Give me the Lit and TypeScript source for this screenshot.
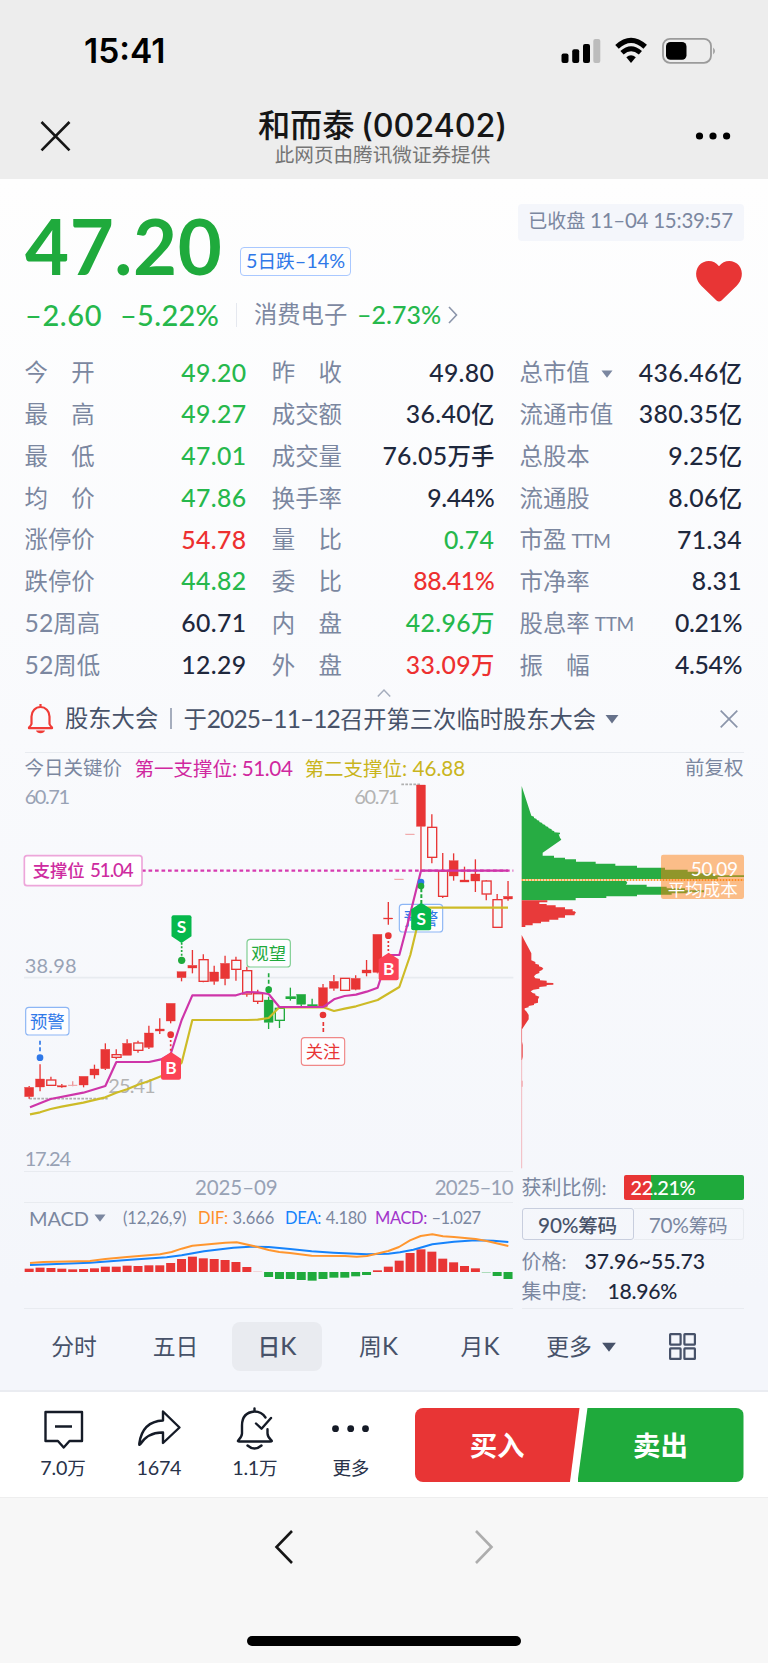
import { LitElement, html, svg, css } from "lit";
import { customElement } from "lit/decorators.js";

type Candle = [kind: string, high: number, top: number, bottom: number, low: number];

const RED = "#e83535";
const GREEN = "#1faa3c";
const STEP = 32.65;
const FIRST = 87.5;

// Plots use three units per CSS pixel.
const CANDLES: Candle[] = [
  ["R", 918, 922, 950, 956], ["R", 853, 897, 921, 934], ["r", 890, 899, 917, 917], ["R", 912, 917, 921, 923],
  ["t", 904, 915, 917, 919], ["R", 889, 889, 915, 922], ["R", 854, 867, 885, 896], ["R", 790, 808, 866, 870],
  ["r", 808, 823, 833, 838], ["R", 778, 790, 826, 826], ["r", 782, 788, 812, 818], ["R", 737, 759, 802, 807],
  ["R", 715, 747, 753, 762], ["R", 670, 670, 723, 730], ["R", 575, 575, 593, 604], ["R", 510, 556, 564, 580],
  ["r", 523, 538, 605, 607], ["R", 557, 576, 604, 614], ["R", 527, 550, 596, 616], ["r", 530, 540, 569, 602],
  ["r", 560, 571, 643, 650], ["r", 629, 640, 665, 672], ["G", 650, 660, 727, 747], ["g", 680, 684, 722, 744],
  ["g", 623, 650, 656, 662], ["G", 643, 643, 673, 680], ["g", 656, 674, 680, 680], ["R", 612, 623, 680, 682],
  ["R", 585, 604, 625, 632], ["r", 594, 594, 632, 632], ["R", 586, 595, 628, 631], ["R", 540, 570, 579, 589],
  ["R", 463, 463, 577, 580], ["R", 366, 414, 417, 434], ["t", 297, 297, 299, 299], ["t", 162, 162, 164, 164],
  ["R", 15, 15, 139, 270], ["r", 103, 141, 233, 250], ["r", 219, 272, 350, 354], ["R", 220, 242, 288, 302],
  ["R", 260, 300, 306, 306], ["R", 238, 282, 303, 336], ["r", 300, 302, 343, 361], ["r", 342, 358, 443, 443],
  ["R", 303, 349, 357, 362],
];

const FIRST_SUPPORT =
  "90,982 120,970 152,957 250,938 316,918 349,846 447,846 483,838 512,822 545,720 577,646 708,646 741,636 773,637 806,642 838,681 970,681 1002,658 1034,648 1068,644 1100,635 1133,623 1165,525 1198,525 1231,400 1263,272 1524,272";
const SECOND_SUPPORT =
  "90,1003 120,997 152,987 185,980 250,968 316,952 349,938 381,928 414,914 447,903 483,889 512,880 545,848 577,720 741,720 773,719 806,714 838,682 970,682 1002,693 1034,686 1068,679 1133,660 1198,621 1231,525 1249,450 1270,383 1524,383";

const MACD = [
  10, 13, 12, 10, 8, 9, 11, 16, 16, 19, 18, 20, 20, 27, 39, 46, 41, 39, 36, 30, 15, 1, -15, -21, -21, -24, -26, -21,
  -17, -17, -13, -9, 5, 16, 34, 57, 68, 61, 40, 29, 18, 11, -2, -12, -21,
];
const DIF =
  "90,309 130,306 270,303 316,297 381,291 480,283 515,276 545,266 577,257 676,248 710,247 773,261 806,270 838,276 870,279 935,287 1035,288 1070,290 1101,288 1165,273 1197,261 1230,241 1262,228 1297,223 1329,229 1362,231 1427,237 1460,243 1525,258";
const DEA =
  "90,315 270,308 381,300 500,292 545,286 612,274 700,263 750,260 806,261 870,267 935,274 1000,278 1100,283 1165,281 1200,277 1240,269 1297,253 1362,245 1427,241 1480,242 1525,246";

const CHIPS_ABOVE =
  "35,48 64,137 72,140 72,144 80,147 80,150 88,152 88,156 97,159 97,162 106,165 106,168 115,171 115,174 125,178 125,181 133,184 133,187 150,188 150,193 146,193 150,203 154,209 98,248 98,257 132,257 132,263 165,263 165,268 198,268 198,275 257,275 257,281 316,281 316,287 381,287 381,293 465,293 465,299 533,299 533,305 565,305 565,310 610,310 610,316 702,316 702,321 623,321 623,327 35,327";
const CHIPS_BELOW =
  "35,333 348,333 352,338 348,344 410,344 410,350 470,350 470,355 525,355 525,361 582,361 582,367 530,367 530,370 485,370 485,374 381,374 381,379 289,379 289,384 197,384 197,391 35,391";
const CHIPS_PROFIT =
  "35,391 112,391 112,397 88,397 88,402 110,402 110,406 137,406 137,412 165,412 165,418 188,418 188,424 194,424 198,428 194,432 194,436 165,436 165,443 145,443 145,449 118,449 118,455 93,455 93,460 68,460 68,466 46,466 46,471 35,471";
const CHIPS_LOW =
  "35,495 64,550 64,571 76,576 76,581 87,584 87,589 96,592 100,596 95,601 88,604 88,609 78,613 72,619 76,625 90,626 90,631 110,632 110,638 130,639 130,644 110,645 110,649 88,651 88,656 70,659 62,664 68,669 76,671 76,676 88,680 84,688 84,698 72,701 72,705 56,708 56,712 44,715 44,719 50,725 56,735 56,748 50,757 36,778 36,815 38,825 38,860 36,870 35,870";

type Stat = [label: string, value: string, tone?: string, extra?: string];
const STATS: Stat[] = [
  ["今　开", "49.20", "down"], ["昨　收", "49.80"], ["总市值", "436.46亿", "", "▾"],
  ["最　高", "49.27", "down"], ["成交额", "36.40亿"], ["流通市值", "380.35亿"],
  ["最　低", "47.01", "down"], ["成交量", "76.05万手"], ["总股本", "9.25亿"],
  ["均　价", "47.86", "down"], ["换手率", "9.44%"], ["流通股", "8.06亿"],
  ["涨停价", "54.78", "up"], ["量　比", "0.74", "down"], ["市盈", "71.34", "", "TTM"],
  ["跌停价", "44.82", "down"], ["委　比", "88.41%", "up"], ["市净率", "8.31"],
  ["52周高", "60.71"], ["内　盘", "42.96万", "down"], ["股息率", "0.21%", "", "TTM"],
  ["52周低", "12.29"], ["外　盘", "33.09万", "up"], ["振　幅", "4.54%"],
];

// Wraps each run of Latin text and digits so it can be sized apart from the Chinese text.
const mixed = (text: string) =>
  text.split(/([!-~–][ -~–]*)/).filter(Boolean).map((part) =>
    /^[!-~–]/.test(part) ? html`<span class=${part.endsWith("%") ? "n pct" : "n"}>${part}</span>` : part);

const triangle = (cls: string) => html`<svg class=${cls} viewBox="0 0 12 8"><path d="M0.5 0.5h11L6 7.8z" fill="currentColor" /></svg>`;

@customElement("app-root")
export class AppRoot extends LitElement {
  static styles = css`
    :host { display: block; width: 768px; height: 1663px; overflow: hidden; background: #f7f7f7; color: #1e283d;
      font-family: Lato, "Noto Sans CJK SC", sans-serif; line-height: 1; white-space: nowrap; }
    * { box-sizing: border-box; }
    svg { display: block; flex: none; overflow: visible; }
    .n { font-size: 1.06em; }
    .up { color: #ed3030; }
    .down { color: #26b84c; }
    .status { height: 95px; background: #ededed; display: flex; align-items: center; padding: 7px 51px 0 84px; justify-content: space-between; }
    .clock { font: 600 33.5px/1 Inter, sans-serif; color: #000; letter-spacing: 0; padding-top: 2px; }
    .nav { height: 84px; background: #ededed; display: flex; justify-content: space-between; padding: 0 37px 0 40px; }
    .nav .x { margin-top: 25px; }
    .nav .dots { margin-top: 37px; }
    .titles { display: flex; flex-direction: column; align-items: center; margin-right: 1px; }
    .title { font: 500 32.3px/40px Inter, "Noto Sans CJK SC", sans-serif; color: #161616; margin-top: 11px; height: 38px; word-spacing: -2px; letter-spacing: -0.1px; }
    .sub { font-size: 19.6px; line-height: 22px; color: #757575; }
    .page { background: linear-gradient(#fefefe, #f4f6fb 92%); height: 1213px; border-bottom: 2px solid #eaecf1; }
    .quote { height: 172px; padding: 25px 24.5px 0 25px; display: flex; justify-content: space-between; }
    .price-line { display: flex; align-items: flex-start; height: 91px; }
    .price { font-size: 76px; font-weight: 700; line-height: 84px; color: #1faa3c; letter-spacing: 0.6px; width: 215px; }
    .tag { margin-top: 43px; height: 29px; width: 111px; border: 1.5px solid #a9c8ff; border-radius: 4px; color: #2f78e8; font-size: 18.7px; line-height: 25px; text-align: center; }
    .changes { display: flex; align-items: center; height: 42px; padding-bottom: 3px; }
    .chg { font-size: 29px; font-weight: 500; color: #26b84c; letter-spacing: 0.6px; }
    .chg1 { width: 95px; } .chg2 { width: 115.5px; letter-spacing: 0.3px; }
    .vr { width: 1.5px; height: 24px; background: #e5e8ef; }
    .sector { font-size: 23.3px; color: #7d88a1; margin-left: 17px; width: 103px; padding-top: 1px; }
    .sector-chg { font-size: 25px; font-weight: 500; color: #26b84c; width: 91px; }
    .side { display: flex; flex-direction: column; align-items: flex-end; }
    .closed { width: 226px; height: 37px; border-radius: 4px; background: #f4f6fb; color: #7b87a0; font-size: 19px; line-height: 33px; text-align: center; }
    .closed .n { font-size: 20.5px; letter-spacing: -0.25px; }
    .heart { margin: 20px 2px 0 0; }
    .stats { display: grid; margin: 0; grid-template-columns: 222px 222.5px 222.5px; column-gap: 25.3px; grid-auto-rows: 41.8px; padding: 1px 25px 0 24.5px; }
    .stat { display: flex; align-items: center; justify-content: space-between; font-size: 23.4px; font-weight: 500; }
    .stat dt { color: #7b87a0; font-weight: 400; display: flex; align-items: center; }
    .stat dd { margin: 0; }
    .stat dd .n { letter-spacing: 0.35px; }
    .stat dd .pct { letter-spacing: -0.4px; }
    .ttm { font-size: 19px; margin-left: 5px; letter-spacing: -0.3px; }
    .tri-s { width: 12px; height: 10px; margin-left: 11px; margin-top: 2px; }
    .caret { height: 14.6px; display: flex; justify-content: center; padding-top: 3px; }
    .notice { height: 52px; margin: 0 24.5px; border-bottom: 1.5px solid #e8ebf0; display: flex; align-items: center; padding: 0 5.5px 15px 2.5px; font-size: 23.3px; color: #475269; }
    .notice .what { margin-left: 11px; width: 105px; }
    .notice .bar { width: 1.5px; height: 21px; background: #a5adbd; margin-right: 12px; }
    .notice .tri-s { margin: 0 auto 0 9px; width: 14px; color: #66718a; }
    .notice .msg .n { font-size: 24.5px; letter-spacing: -0.9px; }
    .keys { height: 27px; display: flex; align-items: center; padding: 3px 24.5px 0 24.5px; font-size: 19.5px; color: #7b87a0; }
    .keys .k0 { width: 110px; } .keys .k1 { width: 170px; color: #d0289f; } .keys .k2 { color: #c9b51d; } .keys .adj { margin-left: auto; }
    .keys .k1 .n { letter-spacing: -0.4px; }
    .lower { display: grid; grid-template-columns: 489px 222px; column-gap: 8.5px; padding-left: 24px; height: 138px; }
    .dates { height: 32px; border-top: 1.5px solid #e8ebf0; border-bottom: 1.5px solid #e8ebf0; display: flex; align-items: center; justify-content: space-between; padding-left: 171px; font-size: 20.5px; color: #98a2b5; letter-spacing: -0.1px; }
    .dates span + span { letter-spacing: -0.7px; }
    .legend { height: 27px; display: flex; align-items: center; padding: 4px 0 0 5px; font-size: 16.5px; color: #7b87a0; letter-spacing: -0.1px; }
    .ind { font-size: 20px; width: 65px; letter-spacing: -0.1px; }
    .legend .tri-s { margin: 0 17px 0 0; }
    .legend .par { width: 75px; } .legend .lg1 { width: 87px; } .legend .lg2 { width: 90px; }
    .legend .lg1 b, .legend .lg2 b, .legend .lg3 b { font-weight: 400; margin-right: 4.5px; }
    .lg1 b { color: #ff8f2b; } .lg2 b { color: #1683fb; } .lg3 b { color: #a235cb; }
    .lg3 { letter-spacing: -0.4px; } .lg2 { letter-spacing: -0.3px; }
    .left { border-bottom: 1.5px solid #e8ebf0; }
    .chips { border-bottom: 1.5px solid #e8ebf0; color: #7b87a0; font-size: 20px; }
    .profit { display: flex; align-items: center; height: 33px; margin-bottom: 4px; }
    .profit .lbl { width: 102px; }
    .gauge { width: 120px; height: 25px; border-radius: 2px; background: linear-gradient(90deg, #e83535 22.6%, #1faa3c 22.6%); color: #fff; font-weight: 500; line-height: 24px; padding-left: 7px; font-size: 20px; letter-spacing: -0.4px; }
    .pair { display: flex; height: 32.5px; }
    .pair div { width: 112px; border: 1.5px solid #c8cede; border-radius: 3px; text-align: center; line-height: 33px; font-weight: 500; color: #475269; font-size: 19.6px; letter-spacing: -0.25px; }
    .pair div + div { border-color: #e8ebf0; border-left: 0; border-radius: 0 3px 3px 0; width: 110px; color: #7b87a0; font-weight: 400; }
    .fact { height: 30px; display: flex; align-items: center; }
    .fact:nth-child(3) { margin-top: 6px; }
    .fact strong { color: #1e283d; font-weight: 500; margin-left: 18px; }
    .fact:nth-child(4) strong { margin-left: 21px; letter-spacing: -0.3px; }
    .periods { height: 82px; display: flex; align-items: center; padding: 0 72px 7px 29px; font-size: 22.8px; color: #475269; }
    .periods div { width: 90px; height: 49px; border-radius: 8px; display: flex; align-items: center; justify-content: center; margin-right: 11.5px; }
    .periods .on { background: #e9ebf0; font-weight: 500; }
    .periods .more { margin-left: 8px; width: 74px; margin-right: auto; }
    .periods .tri-s { width: 16px; margin-left: 9px; }
    .tools { height: 106px; background: #fff; border-bottom: 1.5px solid #eeeeee; display: flex; padding: 16px 24.5px 0 15px; }
    .tool { width: 96px; display: flex; flex-direction: column; align-items: center; font-size: 18.6px; color: #283249; }
    .tool svg { margin-bottom: 8px; }
    .tool p { margin: 0; height: 20px; line-height: 20px; letter-spacing: -0.2px; }
    .trade { margin-left: 16px; width: 329px; height: 74px; border-radius: 8px; overflow: hidden; display: flex; color: #fff; font-size: 27.5px; font-weight: 700; line-height: 75px; text-align: center; }
    .buy { width: 165px; background: #e83535; clip-path: polygon(0 0, 100% 0, 94.2% 100%, 0 100%); }
    .sell { width: 166px; margin-left: -2px; background: #1faa3c; clip-path: polygon(6% 0, 100% 0, 100% 100%, 0 100%); flex: none; }
    .history { height: 138px; display: flex; justify-content: center; gap: 182px; padding-top: 32px; }
    .home { width: 274px; height: 10px; border-radius: 5px; background: #000; margin: 0 auto; }
    .t { font-family: Lato, "Noto Sans CJK SC", sans-serif; }
  `;

  private candle([kind, high, top, bottom, low]: Candle, i: number) {
    const x = FIRST + i * STEP;
    const color = kind.toLowerCase() === "g" ? GREEN : RED;
    const hollow = kind === "r" || kind === "g";
    return svg`<g stroke=${color} stroke-width="4" opacity=${kind === "t" ? 0.5 : 1}>
      ${high < top ? svg`<line x1=${x} x2=${x} y1=${high} y2=${top} />` : ""}
      ${low > bottom ? svg`<line x1=${x} x2=${x} y1=${bottom} y2=${low} />` : ""}
      ${hollow
        ? svg`<rect x=${x - 12.5} y=${top + 1} width="27" height=${Math.max(bottom - top - 2, 3)} fill="none" />`
        : svg`<rect x=${x - 13.5} y=${top} width="27" height=${bottom - top} fill=${color} stroke=${color} stroke-width="1" />`}
    </g>`;
  }

  private badge(x: number, y: number, color: string, letter: string, up: boolean) {
    const shape = up ? "M0-48 30-28V29q0 6-6 6H-24q-6 0-6-6V-28z" : "M0 48 30 28V-29q0-6-6-6H-24q-6 0-6 6V28z";
    return svg`<g transform="translate(${x} ${y})"><path d=${shape} fill=${color} />
      <text class="t" x="0" y="18" font-size="52" font-weight="700" fill="#fff" text-anchor="middle">${letter}</text></g>`;
  }

  private flag(x: number, y: number, color: string, edge: string, text: string) {
    return svg`<rect x=${x} y=${y} width="130" height="83" rx="10" fill="#fdfdff" stroke=${edge} stroke-width="3.5" />
      <text class="t" x=${x + 65} y=${y + 61} font-size="52" fill=${color} text-anchor="middle">${text}</text>`;
  }

  private label(x: number, y: number, width: number, text: string, color = "#98a2b5") {
    return svg`<text class="t" x=${x} y=${y} font-size="60" fill=${color} textLength=${width}>${text}</text>`;
  }

  private chart() {
    return html`<svg width="768" height="391" viewBox="0 0 2304 1173">
      <line x1="72" x2="1540" y1="593" y2="593" stroke="#e8ebf0" stroke-width="5" />
      ${this.label(74, 71, 136, "60.71")} ${this.label(74, 579, 156, "38.98")} ${this.label(74, 1159, 139, "17.24")}
      ${this.label(1063, 71, 136, "60.71", "#b3b3b3")} ${this.label(325, 940, 142, "25.41", "#b3b3b3")}
      <path d="M1204 13h60M88 956h235" stroke="#b0b0b0" stroke-width="5" stroke-dasharray="8 4" />
      <line x1="426" x2="1540" y1="272" y2="272" stroke="#d63ab0" stroke-width="7" stroke-dasharray="11 8.5" />
      ${this.flag(1198, 373, "#2f78e8", "#8db6f5", "预警")}
      ${CANDLES.map((c, i) => this.candle(c, i))}
      <g fill="none" stroke-width="6.5" stroke-linejoin="round">
        <polyline points=${SECOND_SUPPORT} stroke="#cdbb27" />
        <polyline points=${FIRST_SUPPORT} stroke="#ce35a9" />
      </g>
      <rect x="73" y="227" width="353" height="90" rx="8" fill="#fff" stroke="#eda6da" stroke-width="5" />
      <text class="t" x="98" y="290" font-size="52" font-weight="500" fill="#ce2ba0">支撑位</text>
      <text class="t" x="270" y="290" font-size="56" font-weight="500" fill="#ce2ba0" textLength="131">51.04</text>

      <path d="M120 782v34" stroke="#2f78e8" stroke-width="5" stroke-dasharray="12 8" />
      <circle cx="120" cy="833" r="10" fill="#2f78e8" />
      ${this.flag(77, 682, "#2f78e8", "#8db6f5", "预警")}
      <path d="M545 488v42" stroke=${GREEN} stroke-width="5" stroke-dasharray="6 5" />
      <circle cx="545" cy="541" r="11" fill=${GREEN} />
      ${this.badge(544.5, 441, "#06b84c", "S", false)}
      <path d="M512 780v40" stroke=${RED} stroke-width="5" stroke-dasharray="6 7" />
      <circle cx="512" cy="764" r="10" fill=${RED} />
      ${this.badge(513, 864, "#fb4256", "B", true)}
      <path d="M806 580v40" stroke=${GREEN} stroke-width="5" stroke-dasharray="12 7" />
      <circle cx="806" cy="629" r="10" fill=${GREEN} />
      ${this.flag(741, 478, GREEN, "#7dcd90", "观望")}
      <path d="M970 726v30" stroke=${RED} stroke-width="5" stroke-dasharray="12 6" />
      <circle cx="969" cy="705" r="10" fill=${RED} />
      ${this.flag(904, 773, RED, "#f08888", "关注")}
      <path d="M1165 483v36" stroke=${RED} stroke-width="5" stroke-dasharray="6 6" />
      <circle cx="1165" cy="467" r="10" fill=${RED} />
      ${this.badge(1166, 566, "#fb4256", "B", true)}
      <circle cx="1263" cy="306" r="10" fill="#2f78e8" />
      <circle cx="1263" cy="318" r="10" fill=${GREEN} />
      <path d="M1264 326v44" stroke=${GREEN} stroke-width="6" stroke-dasharray="11 6" />
      ${this.badge(1263.5, 416, "#06b84c", "S", true)}

      <g transform="translate(1530 -30)">
        <line x1="35" x2="35" y1="770" y2="1195" stroke="#f2b9bf" stroke-width="3" />
        <path d="M35 932h3v18h-3z" fill="#f2a0a5" />
        <polygon points=${CHIPS_ABOVE} fill="#27ac43" />
        <polygon points=${CHIPS_BELOW} fill="#27ac43" />
        <polygon points=${CHIPS_PROFIT} fill="#e83a3a" />
        <polygon points=${CHIPS_LOW} fill="#e83a3a" />
        <line x1="35" x2="352" y1="330" y2="330" stroke="#e9f3df" stroke-width="6" />
        <line x1="35" x2="702" y1="330" y2="330" stroke="#ff9b32" stroke-width="6" stroke-dasharray="5 4" />
        <rect x="453" y="254" width="249" height="133" rx="7" fill="#ff7f11" fill-opacity="0.49" />
        <text class="t" x="542" y="317" font-size="57" fill="#fff" textLength="142">50.09</text>
        <text class="t" x="473" y="377" font-size="52.5" fill="#fff">平均成本</text>
      </g>
    </svg>`;
  }

  private macdPlot() {
    return html`<svg width="489" height="60" viewBox="72 210 1467 180">
      ${MACD.map((v, i) => svg`<rect x=${FIRST + i * STEP - 13.5} y=${v > 0 ? 336 - v : 336} width="27"
        height=${Math.abs(v)} fill=${v > 0 ? RED : GREEN} opacity=${Math.abs(v) < 3 ? 0.5 : 1} />`)}
      <g fill="none" stroke-width="6" stroke-linejoin="round">
        <polyline points=${DEA} stroke="#1683fb" />
        <polyline points=${DIF} stroke="#ff962f" />
      </g>
    </svg>`;
  }

  render() {
    return html`
      <header>
        <div class="status">
          <div class="clock">15:41</div>
          <svg width="156" height="26" viewBox="561 38 156 26">
            <rect x="561.5" y="53.5" width="7" height="9.5" rx="2" /><rect x="572.2" y="49.3" width="7" height="13.7" rx="2" />
            <rect x="583" y="44" width="7" height="19" rx="2" /><rect x="593.3" y="39" width="7" height="24" rx="2" fill="#bcbcbc" />
            <path d="M617 46.8Q631 34 645.2 46.8" fill="none" stroke="#000" stroke-width="5.2" />
            <path d="M622 52.7Q631 44.6 640.4 52.7" fill="none" stroke="#000" stroke-width="4.8" />
            <path d="M626.3 57.3Q631 53.4 635.8 57.3L631 63z" />
            <rect x="663" y="38.8" width="48" height="24" rx="7" fill="none" stroke="#9b9b9b" stroke-width="1.8" />
            <rect x="666" y="42" width="20.5" height="17.8" rx="4.5" /><path d="M713.3 47.5q3 3.3 0 7z" fill="#8b8b8b" />
          </svg>
        </div>
        <div class="nav">
          <svg class="x" width="31" height="32" viewBox="0 0 31 32"><path d="M1.5 2l28 28.4M29.5 2l-28 28.4" stroke="#161616" stroke-width="2.6" /></svg>
          <div class="titles"><div class="title">和而泰 (002402)</div><div class="sub">此网页由腾讯微证券提供</div></div>
          <svg class="dots" width="36" height="8" viewBox="0 0 36 8"><circle cx="4.5" cy="4" r="3.6" /><circle cx="18" cy="4" r="3.6" /><circle cx="31.6" cy="4" r="3.6" /></svg>
        </div>
      </header>

      <main class="page">
        <section class="quote">
          <div>
            <div class="price-line"><div class="price">47.20</div><div class="tag">${mixed("5日跌–14%")}</div></div>
            <div class="changes">
              <span class="chg chg1">–2.60</span><span class="chg chg2">–5.22%</span><i class="vr"></i>
              <span class="sector">消费电子</span><span class="sector-chg">–2.73%</span>
              <svg width="10" height="18" viewBox="0 0 10 18"><path d="M1 1l7.5 8L1 17" fill="none" stroke="#8b95aa" stroke-width="1.6" /></svg>
            </div>
          </div>
          <div class="side">
            <div class="closed">${mixed("已收盘 11–04 15:39:57")}</div>
            <svg class="heart" width="46" height="41" viewBox="0 0 46 41"><path d="M23 5.2C28-1.8 38-1.5 43 4.5c5 6.5 3 15-2.5 20.5L25.5 39.5q-2.5 2.2-5 0L5.5 25C0 19.500-2 11 3 4.500 8-1.500 18-1.800 23 5.200z" fill="#e83535" /></svg>
          </div>
        </section>

        <dl class="stats">
          ${STATS.map(([label, value, tone, extra]) => html`<div class="stat">
            <dt>${mixed(label)}${extra === "TTM" ? html`<span class="ttm">TTM</span>` : extra ? triangle("tri-s") : ""}</dt>
            <dd class=${tone ?? ""}>${mixed(value)}</dd></div>`)}
        </dl>
        <div class="caret"><svg width="14" height="8" viewBox="0 0 14 8"><path d="M0.8 7.5L7 1l6.2 6.500" fill="none" stroke="#a5adbd" stroke-width="1.5" /></svg></div>

        <div class="notice">
          <svg width="27" height="30" viewBox="0 0 27 30" fill="none" stroke="#f03b36" stroke-width="2.2">
            <path d="M13.5 0v3M4.5 20v-7.500a9 9.500 0 0118 0V20q.5 1.5 2.5 3.500v.7H2v-.7q2-2 2.500-3.500z" stroke-linejoin="round" /><path d="M9 26.500h9q-1 2.700-4.500 2.700T9 26.500z" fill="#f03b36" stroke="none" />
          </svg>
          <span class="what">股东大会</span><i class="bar"></i><span class="msg">${mixed("于2025–11–12召开第三次临时股东大会")}</span>
          ${triangle("tri-s")}
          <svg width="18" height="18" viewBox="0 0 18 18"><path d="M.7.7l16.600 16.600M17.300.7L.7 17.300" stroke="#8b95aa" stroke-width="1.7" /></svg>
        </div>

        <div class="keys"><span class="k0">今日关键价</span><span class="k1">${mixed("第一支撑位: 51.04")}</span><span class="k2">${mixed("第二支撑位: 46.88")}</span><span class="adj">前复权</span></div>
        ${this.chart()}

        <section class="lower">
          <div class="left">
            <div class="dates"><span>2025–09</span><span>2025–10</span></div>
            <div class="legend"><span class="ind">MACD</span>${triangle("tri-s")}<span class="par">(12,26,9)</span>
              <span class="lg1"><b>DIF:</b>3.666</span><span class="lg2"><b>DEA:</b>4.180</span><span class="lg3"><b>MACD:</b>–1.027</span></div>
            ${this.macdPlot()}
          </div>
          <div class="chips">
            <div class="profit"><span class="lbl">获利比例:</span><div class="gauge">22.21%</div></div>
            <div class="pair"><div>${mixed("90%筹码")}</div><div>${mixed("70%筹码")}</div></div>
            <div class="fact">价格:<strong>${mixed("37.96~55.73")}</strong></div>
            <div class="fact">集中度:<strong>${mixed("18.96%")}</strong></div>
          </div>
        </section>

        <nav class="periods">
          <div>分时</div><div>五日</div><div class="on">${mixed("日K")}</div><div>${mixed("周K")}</div><div>${mixed("月K")}</div>
          <div class="more">更多${triangle("tri-s")}</div>
          <svg width="27" height="27" viewBox="0 0 27 27" fill="none" stroke="#475269" stroke-width="2.2"><rect x="1.1" y="1.1" width="10.5" height="10.5" rx=".5" /><rect x="15.4" y="1.1" width="10.5" height="10.5" rx=".5" /><rect x="1.1" y="15.4" width="10.5" height="10.5" rx=".5" /><rect x="15.4" y="15.4" width="10.5" height="10.5" rx=".5" /></svg>
        </nav>
      </main>

      <footer>
        <div class="tools">
          <div class="tool"><svg width="40" height="42" viewBox="43 1408 40 42" fill="none" stroke="#151b27" stroke-width="2.4" stroke-linejoin="round"><path d="M45.5 1412h36.500v29H69.500l-5.800 6.500-5.800-6.500H45.500zM55 1426.500h17" /></svg><p>${mixed("7.0万")}</p></div>
          <div class="tool"><svg width="42" height="42" viewBox="138 1408 42 42" fill="none" stroke="#151b27" stroke-width="2.4" stroke-linejoin="round"><path d="M163 1411.500l16.500 16-16.500 15.500v-10.500q-15-.5-23 12-1 1-.7-1 3-22 23.700-23z" /></svg><p>${mixed("1674")}</p></div>
          <div class="tool"><svg width="42" height="42" viewBox="235 1408 42 42" fill="none" stroke="#151b27" stroke-width="2.4" stroke-linejoin="round" stroke-linecap="round"><path d="M255.500 1408.500v3M266.500 1417.500q-4-6-11-6-12.500 1-12.500 14v8q0 3-3.500 6.500-1.500 1.500 1 1.500h30.500q3 0 1-1.700-3.500-3-3.500-6.500v-4M257 1423.500l5.500 5.200L272 1418M248.500 1445.500q7 6 14 0" /></svg><p>${mixed("1.1万")}</p></div>
          <div class="tool"><svg width="42" height="42" viewBox="331 1408 42 42"><g fill="#151b27"><circle cx="336.500" cy="1428.700" r="3.400" /><circle cx="351.700" cy="1428.700" r="3.400" /><circle cx="366.500" cy="1428.700" r="3.400" /></g></svg><p>更多</p></div>
          <div class="trade"><div class="buy">买入</div><div class="sell">卖出</div></div>
        </div>
        <div class="history">
          <svg width="18" height="34" viewBox="0 0 18 34"><path d="M17 1L1.5 17 17 33" fill="none" stroke="#161616" stroke-width="2.6" /></svg>
          <svg width="18" height="34" viewBox="0 0 18 34"><path d="M1 1l15.500 16L1 33" fill="none" stroke="#adadad" stroke-width="2.6" /></svg>
        </div>
        <div class="home"></div>
      </footer>
    `;
  }
}
